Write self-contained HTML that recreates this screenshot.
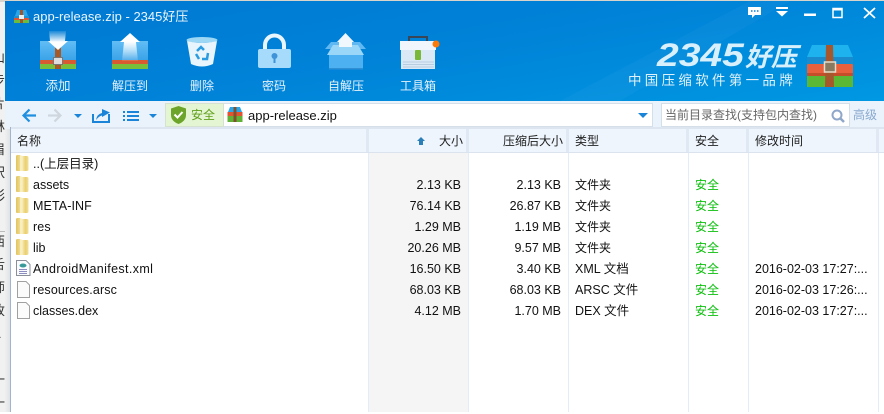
<!DOCTYPE html>
<html><head><meta charset="utf-8"><style>
html,body{margin:0;padding:0;background:#fff}
body{width:884px;height:412px;position:relative;overflow:hidden;font-family:"Liberation Sans","Noto Sans CJK SC",sans-serif;font-size:12.5px;color:#111}
.a{position:absolute;white-space:nowrap}
.tb{position:absolute;top:78px;color:#e6f3fc;font-size:12px;text-align:center;width:60px;line-height:16px}
.c{position:absolute;white-space:nowrap;line-height:21px;height:21px}
.z{font-size:12px}
.r{text-align:right}
.g{color:#0cbf0c;font-size:12px}
.h{position:absolute;top:129px;height:23px;line-height:24px;background:#eef5fd;border-right:3px solid #dfe8f3;box-sizing:border-box;font-size:12px;color:#222}
svg{position:absolute;overflow:visible}
</style></head><body>
<!-- background noise left -->
<div class="a" style="left:0;top:0;width:5px;height:412px;background:#f1f1f1"></div>
<div class="a" style="left:0;top:0;width:884px;height:2px;background:#d8d4cc"></div>
<div class="a" style="left:-8px;top:46px;font-size:13px;line-height:23px;color:#333;white-space:pre-line">山
步
片
林
眉
呎
彩
n
西
舌
师
改
A

一
一</div>
<div class="a" style="left:0;top:231px;width:5px;height:1px;background:#bbb"></div>
<!-- title/toolbar -->
<div class="a" style="left:5px;top:1px;width:879px;height:100px;background:linear-gradient(170deg,#0078d2 0%,#0083d8 50%,#0098e2 100%)"></div>
<svg style="left:560px;top:1px" width="324" height="100"><path d="M0 100L190 0H230L60 100Z" fill="#fff" opacity=".03"/></svg>
<svg style="left:14px;top:10px" width="15" height="14"><path d="M1 6L3 0H12L14 6Z" fill="#2aa6e8"/><rect x="0" y="6" width="15" height="2" fill="#1f8fd0"/><rect x="0" y="8" width="15" height="2" fill="#e0552f"/><rect x="0" y="10" width="15" height="3" fill="#6cbb3c"/><rect x="6" y="0" width="3" height="13" fill="#a0552a"/><rect x="5" y="5" width="5" height="4" fill="#eee"/></svg>
<div class="a" style="left:33px;top:8px;color:#e9f5fd;font-size:13px;line-height:18px">app-release.zip - 2345好压</div>

<svg width="0" height="0" style="left:0;top:0"><defs><linearGradient id="dw" x1="0" y1="0" x2="0" y2="1"><stop offset="0" stop-color="#fff" stop-opacity=".1"/><stop offset=".6" stop-color="#fff"/></linearGradient>
<linearGradient id="up" x1="0" y1="0" x2="0" y2="1"><stop offset=".3" stop-color="#fff"/><stop offset="1" stop-color="#fff" stop-opacity=".1"/></linearGradient>
<linearGradient id="bx" x1="0" y1="0" x2="0" y2="1"><stop offset="0" stop-color="#62bdf5"/><stop offset="1" stop-color="#3aa3e8"/></linearGradient>
<linearGradient id="f" x1="0" y1="0" x2="1" y2="0"><stop offset="0" stop-color="#f6e9ac"/><stop offset=".5" stop-color="#eacf72"/><stop offset="1" stop-color="#f3e19a"/></linearGradient>
<linearGradient id="f2" x1="0" y1="0" x2="1" y2="0"><stop offset="0" stop-color="#e2c25c"/><stop offset="1" stop-color="#f0dc90"/></linearGradient>
</defs></svg>
<!-- toolbar icon 1 add -->
<svg style="left:40px;top:31px" width="37" height="40">
<path d="M0 10H36V29H0Z" fill="url(#bx)"/><rect y="29" width="36" height="4" fill="#d85a30"/><rect y="33" width="36" height="5" fill="#78c03c"/>
<rect x="15" y="15" width="6" height="23" fill="#a65a2a"/><rect x="13.500" y="26.500" width="9" height="7" fill="#ddd" stroke="#777"/>
<path d="M9 0H26L25 10H28L18 19L8 10H10Z" fill="url(#dw)"/></svg>
<!-- icon 2 -->
<svg style="left:112px;top:33px" width="37" height="38">
<path d="M0 8H36V27H0Z" fill="url(#bx)"/><rect y="27" width="36" height="4" fill="#d85a30"/><rect y="31" width="36" height="5" fill="#78c03c"/>
<path d="M18 0L28 9H24L26 28H10L12 9H8Z" fill="url(#up)"/></svg>
<!-- recycle bin -->
<svg style="left:186px;top:36px" width="32" height="34">
<ellipse cx="16" cy="4" rx="15.500" ry="3" fill="#9cd8f5"/><path d="M1 5Q16 9 31 5L27 28Q16 33 5 28Z" fill="#e8f5fc"/>
<path d="M11 15l4-4 3 3M22 17l-1 6h-5M10 18l3 5" fill="none" stroke="#2b9ce0" stroke-width="2.500"/></svg>
<!-- lock -->
<svg style="left:258px;top:34px" width="34" height="36">
<path d="M7 16V11A9.500 9.500 0 0 1 26 11V16" fill="none" stroke="#eaf6fe" stroke-width="4"/>
<rect y="15" width="33" height="19" rx="2" fill="#a6dbfb"/><circle cx="16.500" cy="22" r="3" fill="#3f93d8"/><rect x="15.500" y="23" width="2" height="6" fill="#3f93d8"/></svg>
<!-- self-extract -->
<svg style="left:325px;top:33px" width="42" height="38">
<path d="M0 16L6 9H35L41 16Z" fill="#5fb8f2"/>
<path d="M2 22L8 12H33L39 22Z" fill="#9ad6f8"/><rect x="4" y="22" width="34" height="14" fill="#4db0f0"/><rect x="4" y="35" width="34" height="1.500" fill="#2f8fd4"/>
<path d="M20.500 0L29 9H27V14H14V9H12Z" fill="#f0f8fd"/></svg>
<!-- toolbox -->
<svg style="left:399px;top:35px" width="42" height="36">
<path d="M10 7V2H28V7" fill="none" stroke="#3a4656" stroke-width="2"/><rect x="1" y="6" width="36" height="9" fill="#f0f6fb"/><rect x="2" y="15" width="34" height="19" fill="#dbe9f6"/>
<rect x="16" y="15" width="6" height="10" rx="1" fill="#7ab83a"/><path d="M4 27H35M4 29.500H35M4 32H35" stroke="#b8cde0"/><circle cx="37" cy="9" r="3.500" fill="#fb7a0a"/></svg>
<div class="tb" style="left:28px;font-size:12.500px">添加</div>
<div class="tb" style="left:100px">解压到</div>
<div class="tb" style="left:172px">删除</div>
<div class="tb" style="left:244px">密码</div>
<div class="tb" style="left:316px">自解压</div>
<div class="tb" style="left:388px">工具箱</div>

<!-- window controls -->
<svg style="left:748px;top:7px" width="130" height="14">
<path d="M0 0H13V8H7L4 11V8H0Z" fill="#fff"/><path d="M3 4h1.500M6 4h1.500M9 4h1.500" stroke="#0a7fd5" stroke-width="1.500"/>
<path d="M28 0H40V2H28ZM28 4H40L34 9.500Z" fill="#fff"/>
<rect x="56" y="6.500" width="12" height="2.500" fill="#fff"/>
<rect x="85" y="1.500" width="9" height="9" fill="none" stroke="#fff" stroke-width="1.500"/><rect x="85" y="1" width="9" height="2.500" fill="#fff"/>
<path d="M116 1L127 11M127 1L116 11" stroke="#fff" stroke-width="1.800"/></svg>

<!-- logo -->
<div class="a" style="left:657px;top:40px;font:italic bold 32px/30px 'Liberation Sans','Noto Sans CJK SC',sans-serif;color:#d8f0fc;transform-origin:0 0;transform:scaleX(1.22)">2345</div>
<div class="a" style="left:745px;top:42px;font:italic bold 26px/30px 'Liberation Sans','Noto Sans CJK SC',sans-serif;color:#d8f0fc">好压</div>
<div class="a" style="left:628px;top:72px;font-size:13.500px;line-height:17px;color:#dff1fc;letter-spacing:3.300px">中国压缩软件第一品牌</div>
<svg style="left:807px;top:45px" width="46" height="42">
<path d="M5 0H41L46 12V17H0V12Z" fill="#1eb2ee"/><path d="M0 12H46V20H0Z" fill="#1a8ccd"/>
<path d="M0 20Q0 19 1 19H45Q46 19 46 20V31H0Z" fill="#e8613c"/><rect y="28" width="46" height="3" fill="#c44d2a"/>
<path d="M0 31H46V42H0Z" fill="#5bb834"/>
<path d="M19 0H26L27 42H18Z" fill="#a6582c"/><rect x="17.500" y="17" width="11" height="10" fill="#8a7a60" stroke="#e4dccb" stroke-width="1.500"/></svg>

<!-- address bar -->
<div class="a" style="left:5px;top:101px;width:879px;height:28px;background:#eaf3fc"></div>
<svg style="left:22px;top:108px" width="145" height="16">
<path d="M14 7.500H2M7.500 1.500L1.500 7.500L7.500 13.500" fill="none" stroke="#1f8fe0" stroke-width="2.200"/>
<path d="M26 7.500H38M32.500 1.500L38.500 7.500L32.500 13.500" fill="none" stroke="#cfd6de" stroke-width="2.200"/>
<path d="M52 6H60L56 10Z" fill="#1a85d8"/>
<path d="M71 6V14H87V6" fill="none" stroke="#1a85d8" stroke-width="2"/><path d="M74 12Q75 6 80 5V1L88 4.500L80 9V7.500Q77 8 74 12Z" fill="#1a85d8"/>
<path d="M101 3h2v2h-2zM105 3h12v2h-12zM101 7h2v2h-2zM105 7h12v2h-12zM101 11h2v2h-2zM105 11h12v2h-12z" fill="#1a85d8"/>
<path d="M127 6H135L131 10Z" fill="#1a85d8"/></svg>
<div class="a" style="left:165px;top:103px;width:59px;height:24px;background:#e4f5d4;border:1px solid #d5e2d0;box-sizing:border-box"></div>
<svg style="left:171px;top:106px" width="15" height="18"><path d="M7.500 0L15 2.500V9Q15 15 7.500 18Q0 15 0 9V2.500Z" fill="#6da52a"/><path d="M3.500 8.500L6.500 11.500L11.500 6" fill="none" stroke="#fff" stroke-width="2"/></svg>
<div class="a" style="left:191px;top:107px;color:#5f9f1a;line-height:16px;font-size:12px">安全</div>
<div class="a" style="left:224px;top:103px;width:429px;height:24px;background:#fff;border:1px solid #d5dfe9;border-left:0;box-sizing:border-box"></div>
<svg style="left:227px;top:107px" width="16" height="16"><path d="M1 5L3 0H13L15 5Z" fill="#2aa6e8"/><rect x="0.500" y="5" width="15" height="4" fill="#e0552f"/><rect x="0.500" y="9" width="15" height="6" fill="#5fb236"/><rect x="6.500" y="0" width="3" height="15" fill="#80502c"/></svg>
<div class="a" style="left:248px;top:107px;font-size:13px;line-height:17px;color:#111">app-release.zip</div>
<svg style="left:638px;top:113px" width="10" height="6"><path d="M0 0H10L5 5Z" fill="#1a85d8"/></svg>
<div class="a" style="left:661px;top:103px;width:189px;height:24px;background:#fff;border:1px solid #d5dfe9;box-sizing:border-box"></div>
<div class="a" style="left:665px;top:107px;font-size:12px;line-height:17px;color:#666">当前目录查找(支持包内查找)</div>
<svg style="left:831px;top:109px" width="14" height="14"><circle cx="6" cy="6" r="4.500" fill="none" stroke="#8fa7c8" stroke-width="2"/><path d="M9 9L13 13" stroke="#8fa7c8" stroke-width="2.500"/></svg>
<div class="a" style="left:853px;top:107px;font-size:12px;line-height:16px;color:#89a9cf">高级</div>

<!-- list -->
<div class="a" style="left:5px;top:129px;width:5px;height:283px;background:linear-gradient(90deg,#f0f0f0,#dfe2e6)"></div>
<div class="a" style="left:10px;top:127px;width:1px;height:285px;background:#a4b4cc"></div>
<div class="a" style="left:11px;top:127px;width:873px;height:2px;background:#dde6f0"></div>
<div class="a" style="left:369px;top:152px;width:99px;height:260px;background:#f5f5f5"></div>
<div class="a" style="left:368px;top:152px;width:1px;height:260px;background:#e3edfa"></div>
<div class="a" style="left:468px;top:152px;width:1px;height:260px;background:#e3edfa"></div>
<div class="a" style="left:568px;top:152px;width:1px;height:260px;background:#e3edfa"></div>
<div class="a" style="left:688px;top:152px;width:1px;height:260px;background:#e3edfa"></div>
<div class="a" style="left:748px;top:152px;width:1px;height:260px;background:#e3edfa"></div>
<div class="a" style="left:878px;top:152px;width:1px;height:260px;background:#e3edfa"></div>

<div class="h" style="left:11px;width:358px;padding-left:6px">名称</div>
<div class="h" style="left:369px;width:100px;text-align:right;padding-right:3px">大小</div>
<svg style="left:417px;top:137px" width="8" height="8"><path d="M4 0L8 4H6V8H2V4H0Z" fill="#2a7fb8"/></svg>
<div class="h" style="left:469px;width:100px;text-align:right;padding-right:3px">压缩后大小</div>
<div class="h" style="left:569px;width:120px;padding-left:6px">类型</div>
<div class="h" style="left:689px;width:60px;padding-left:6px">安全</div>
<div class="h" style="left:749px;width:130px;padding-left:6px">修改时间</div>
<div class="h" style="left:879px;width:5px;border:0"></div>
<div class="a" style="left:11px;top:152px;width:873px;height:1px;background:#dbe4ee"></div>

<!-- folder icons -->
<svg style="left:16px;top:155px" width="14" height="105">
<defs><g id="fd"><path d="M0 1.500Q0 0 1.500 0H4V16H1Q0 16 0 15Z" fill="url(#f2)"/><path d="M4 0L6.500 1V16H4Z" fill="#f7efc0"/><path d="M6.500 1L11 1Q12.500 1 12.500 2.500V14.500Q12.500 16 11 16H6.500Z" fill="url(#f)"/></g></defs>
<use href="#fd" x="0" y="0"/><use href="#fd" x="0" y="21"/><use href="#fd" x="0" y="42"/><use href="#fd" x="0" y="63"/><use href="#fd" x="0" y="84"/></svg>
<!-- file icons -->
<svg style="left:16px;top:260px" width="15" height="60">
<path d="M.5.5H10L14 4.500V15.500H.5Z" fill="#fafbfc" stroke="#8a8f98"/><ellipse cx="7" cy="5.500" rx="3.500" ry="2" fill="#3a9a9a"/><path d="M3 9.500H11M3 11.500H11M3 13.500H11" stroke="#8c8cc0"/>
<path d="M1.500 21.500H10L13.500 25V37.500H1.500Z" fill="#fbfbfb" stroke="#a0a0a0"/>
<path d="M1.500 42.500H10L13.500 46V58.500H1.500Z" fill="#fbfbfb" stroke="#a0a0a0"/></svg>

<!-- rows -->
<div class="c" style="left:33px;top:154px">..(上层目录)</div>
<div class="c" style="left:33px;top:175px">assets</div>
<div class="c" style="left:33px;top:196px;letter-spacing:.1px">META-INF</div>
<div class="c" style="left:33px;top:217px;letter-spacing:.1px">res</div>
<div class="c" style="left:33px;top:238px">lib</div>
<div class="c" style="left:33px;top:259px;letter-spacing:.37px">AndroidManifest.xml</div>
<div class="c" style="left:33px;top:280px;letter-spacing:.15px">resources.arsc</div>
<div class="c" style="left:33px;top:301px">classes.dex</div>

<div class="c r" style="left:369px;width:92px;top:175px">2.13 KB</div>
<div class="c r" style="left:369px;width:92px;top:196px">76.14 KB</div>
<div class="c r" style="left:369px;width:92px;top:217px">1.29 MB</div>
<div class="c r" style="left:369px;width:92px;top:238px">20.26 MB</div>
<div class="c r" style="left:369px;width:92px;top:259px">16.50 KB</div>
<div class="c r" style="left:369px;width:92px;top:280px">68.03 KB</div>
<div class="c r" style="left:369px;width:92px;top:301px">4.12 MB</div>

<div class="c r" style="left:469px;width:92px;top:175px">2.13 KB</div>
<div class="c r" style="left:469px;width:92px;top:196px">26.87 KB</div>
<div class="c r" style="left:469px;width:92px;top:217px">1.19 MB</div>
<div class="c r" style="left:469px;width:92px;top:238px">9.57 MB</div>
<div class="c r" style="left:469px;width:92px;top:259px">3.40 KB</div>
<div class="c r" style="left:469px;width:92px;top:280px">68.03 KB</div>
<div class="c r" style="left:469px;width:92px;top:301px">1.70 MB</div>

<div class="c z" style="left:575px;top:175px">文件夹</div>
<div class="c z" style="left:575px;top:196px">文件夹</div>
<div class="c z" style="left:575px;top:217px">文件夹</div>
<div class="c z" style="left:575px;top:238px">文件夹</div>
<div class="c" style="left:575px;top:259px">XML 文档</div>
<div class="c" style="left:575px;top:280px">ARSC 文件</div>
<div class="c" style="left:575px;top:301px">DEX 文件</div>

<div class="c g" style="left:695px;top:175px">安全</div>
<div class="c g" style="left:695px;top:196px">安全</div>
<div class="c g" style="left:695px;top:217px">安全</div>
<div class="c g" style="left:695px;top:238px">安全</div>
<div class="c g" style="left:695px;top:259px">安全</div>
<div class="c g" style="left:695px;top:280px">安全</div>
<div class="c g" style="left:695px;top:301px">安全</div>

<div class="c" style="left:755px;top:259px">2016-02-03 17:27:...</div>
<div class="c" style="left:755px;top:280px">2016-02-03 17:26:...</div>
<div class="c" style="left:755px;top:301px">2016-02-03 17:27:...</div>
</body></html>
